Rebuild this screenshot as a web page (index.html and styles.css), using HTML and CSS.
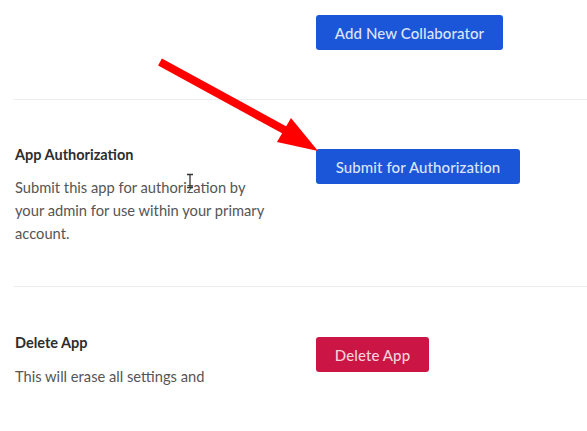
FILE: index.html
```html
<!DOCTYPE html>
<html>
<head>
<meta charset="utf-8">
<link rel="stylesheet" href="styles.css">
</head>
<body>
<main class="page">
  <section class="row row-first">
    <div class="info"></div>
    <div class="action"><button class="btn btn-blue btn-add">Add New Collaborator</button></div>
  </section>
  <section class="row row-auth">
    <div class="info">
      <h3 class="title">App Authorization</h3>
      <p class="desc">Submit this app for authorization by your admin for use within your primary account.</p>
    </div>
    <div class="action"><button class="btn btn-blue btn-submit">Submit for Authorization</button></div>
  </section>
  <section class="row row-delete">
    <div class="info">
      <h3 class="title">Delete App</h3>
      <p class="desc">This will erase all settings and</p>
    </div>
    <div class="action"><button class="btn btn-red btn-delete">Delete App</button></div>
  </section>
</main>
<svg class="arrow" width="587" height="431" viewBox="0 0 587 431">
  <line x1="160" y1="62" x2="290" y2="133" stroke="#ff0000" stroke-width="8" stroke-linecap="butt"/>
  <polygon points="277,142 291,118 318,151" fill="#ff0000"/>
</svg>
<svg class="cursor" width="10" height="16" viewBox="0 0 10 16">
  <path d="M2 1.5h6M5 1.5v13M2 14.5h6" stroke="#333" stroke-width="1.3" fill="none"/>
</svg>
</body>
</html>
```
FILE: styles.css
```css
* { box-sizing: border-box; }
html, body { margin: 0; padding: 0; background: #fff; }
body {
  font-family: Lato, "Open Sans", sans-serif;
  width: 587px;
  height: 431px;
  overflow: hidden;
  position: relative;
}
.page {
  padding-left: 14px;
}
.row {
  display: flex;
  border-bottom: 1px solid #ececec;
}
.row-first {
  padding-top: 15px;
  height: 100px;
}
.row-auth {
  padding-top: 45px;
  height: 187px;
}
.row-delete {
  padding-top: 46px;
  border-bottom: none;
}
.info {
  width: 302px;
  padding-left: 1px;
  flex: none;
}
.title {
  margin: 0;
  font-size: 14.5px;
  font-weight: 700;
  line-height: 20px;
  color: #2d2d2d;
}
.desc {
  margin: 11px 0 0;
  width: 258px;
  font-size: 14.7px;
  line-height: 23px;
  color: #555;
}
.row-delete .desc { margin-top: 12px; }
.action { flex: none; }
.btn {
  font-family: Lato, "Open Sans", sans-serif;
  font-size: 15px;
  font-weight: 500;
  height: 35px;
  border: none;
  border-radius: 3px;
  padding: 0;
  letter-spacing: 0.1px;
}
.btn-blue {
  background: #1b56d8;
  color: #dbe5f8;
}
.btn-red {
  background: #cb1544;
  color: #f3d3db;
}
.btn-add { width: 187px; }
.btn-submit { width: 204px; margin-top: 4px; }
.btn-delete { width: 113px; margin-top: 4px; }
.arrow {
  position: absolute;
  left: 0;
  top: 0;
  pointer-events: none;
}
.cursor {
  position: absolute;
  left: 185px;
  top: 173px;
}
```
